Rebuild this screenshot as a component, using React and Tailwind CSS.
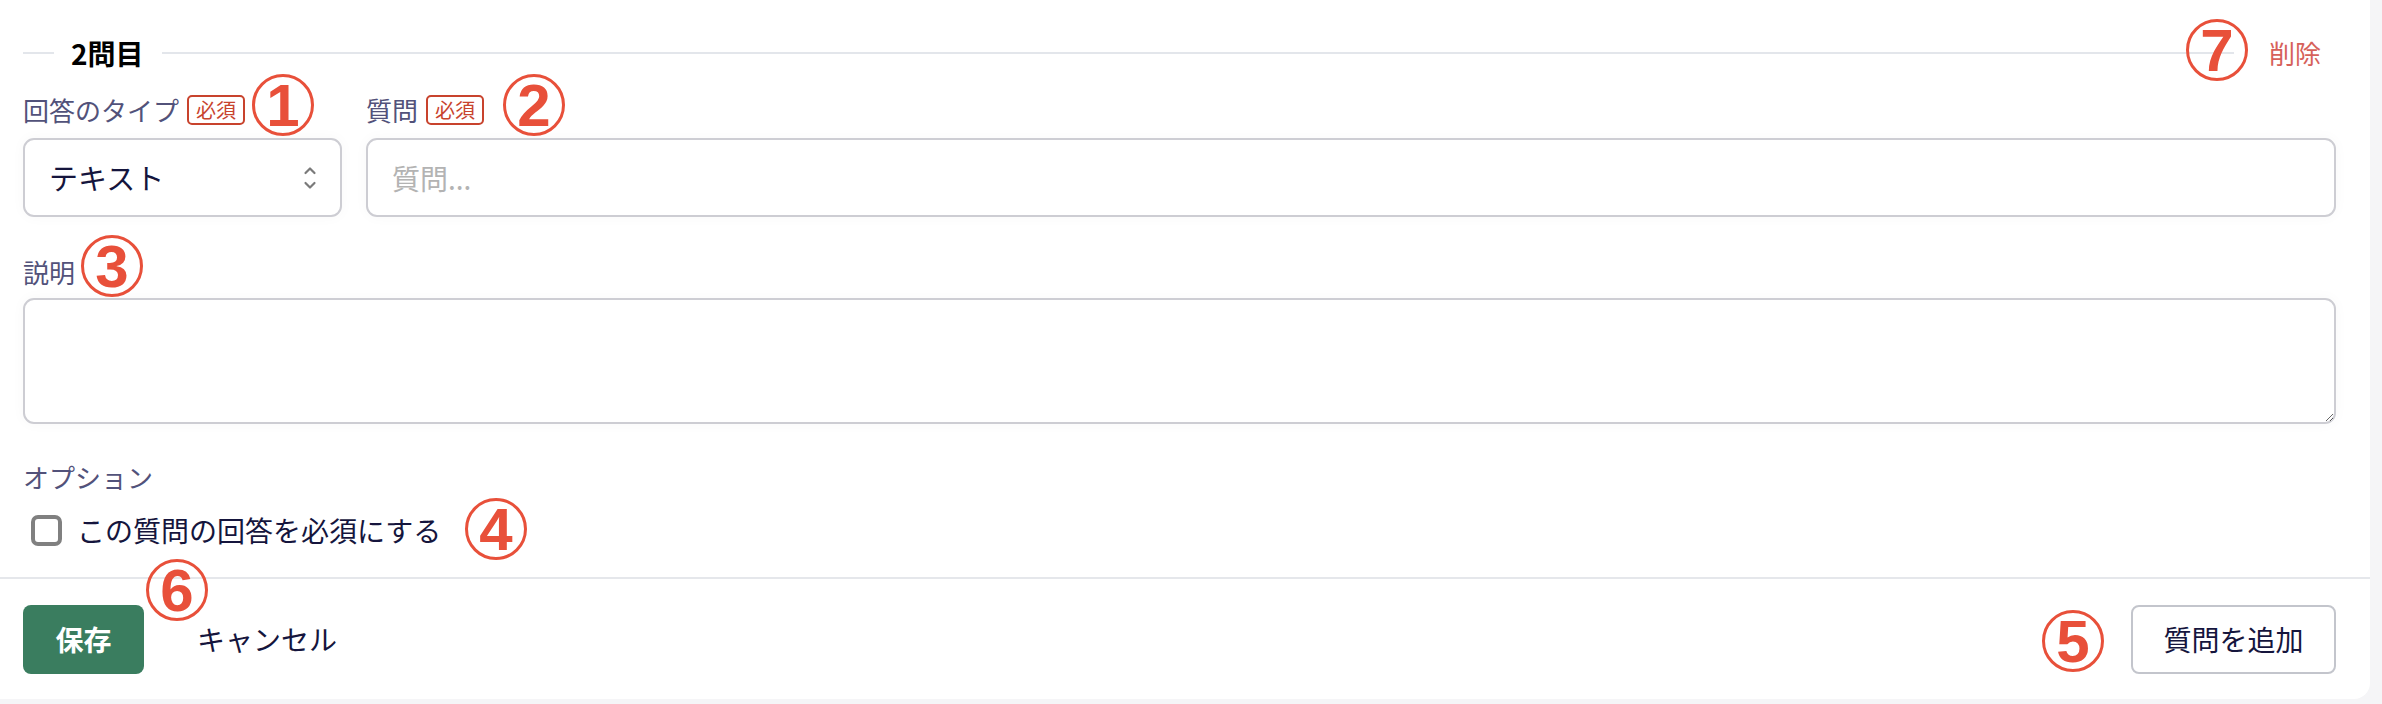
import React from "react";

function Circ({ n, className }) {
  return (
    <div
      className={`absolute w-[62px] h-[62px] rounded-full border-[3px] border-[#e8503a] bg-transparent flex items-center justify-center text-[#e8503a] font-['Liberation_Sans',sans-serif] font-bold text-[60px] leading-none pointer-events-none ${className}`}
    >
      <span className="block translate-y-[1px]">{n}</span>
    </div>
  );
}

function Badge() {
  return (
    <span className="ml-[8px] h-[30px] px-[7px] border-2 border-[#c8432d] rounded-[5px] text-[20px] leading-none text-[#c8432d] flex items-center">
      必須
    </span>
  );
}

export default function App() {
  return (
    <div className="w-[2382px] h-[704px] bg-[#f5f5f7] font-['Noto_Sans_CJK_JP',sans-serif]">
      <div className="relative w-[2370px] h-[699px] bg-white rounded-br-[16px] flex flex-col">
        <div className="pl-[23px] pr-[34px] pt-[38px]">
          {/* heading */}
          <div className="h-[30px] flex items-center">
            <div className="w-[31px] h-[2px] bg-[#e3e6eb]" />
            <span className="ml-[17px] text-[28px] font-bold leading-none text-black">2問目</span>
            <div className="ml-[18px] flex-1 h-[2px] bg-[#e3e6eb]" />
            <span className="ml-[35px] mr-[15px] text-[26px] leading-none text-[#d6615a]">削除</span>
          </div>

          {/* type + question */}
          <div className="mt-[27px] flex gap-[24px]">
            <div className="w-[319px]">
              <div className="h-[30px] flex items-center">
                <span className="text-[26px] leading-none text-[#52527a]">回答のタイプ</span>
                <Badge />
              </div>
              <div className="mt-[13px] h-[79px] border-2 border-[#cdcdd3] rounded-[11px] bg-white flex items-center justify-between pl-[24px] pr-[22px] shadow-[0_0_14px_rgba(0,0,0,0.03)]">
                <span className="text-[29px] leading-none text-[#15153d]">テキスト</span>
                <svg width="16" height="34" viewBox="0 0 16 34" fill="none" stroke="#7a7a7a" strokeWidth="2.2" strokeLinecap="round" strokeLinejoin="round">
                  <polyline points="3.5,12 8,7.5 12.5,12" />
                  <polyline points="3.5,22 8,26.5 12.5,22" />
                </svg>
              </div>
            </div>
            <div className="flex-1">
              <div className="h-[30px] flex items-center">
                <span className="text-[26px] leading-none text-[#52527a]">質問</span>
                <Badge />
              </div>
              <input
                className="mt-[13px] w-full h-[79px] border-2 border-[#cdcdd3] rounded-[11px] bg-white px-[24px] text-[28px] text-[#15153d] placeholder:text-[#b3b3b3] outline-none shadow-[0_0_14px_rgba(0,0,0,0.03)]"
                placeholder="質問..."
              />
            </div>
          </div>

          {/* description */}
          <div className="mt-[40px] h-[30px] flex items-center">
            <span className="text-[26px] leading-none text-[#52527a]">説明</span>
          </div>
          <textarea className="mt-[11px] block w-full h-[126px] border-2 border-[#cdcdd3] rounded-[11px] bg-white outline-none shadow-[0_0_14px_rgba(0,0,0,0.03)]" />

          {/* options */}
          <div className="mt-[38px] h-[30px] flex items-center">
            <span className="text-[26px] leading-none text-[#52527a]">オプション</span>
          </div>
          <div className="mt-[20px] h-[36px] flex items-center pl-[8px]">
            <div className="w-[31px] h-[31px] border-[4px] border-[#808080] rounded-[7px] bg-white" />
            <span className="ml-[15px] text-[28px] leading-none text-[#15153d]">この質問の回答を必須にする</span>
          </div>
        </div>

        <div className="mt-[29px] h-[2px] bg-[#e5e7eb]" />

        <div className="flex-1 flex items-center justify-between pl-[23px] pr-[34px]">
          <div className="flex items-center">
            <button className="w-[121px] h-[69px] bg-[#3a7d5f] rounded-[8px] text-white font-bold text-[28px] leading-none flex items-center justify-center">
              保存
            </button>
            <span className="ml-[53px] text-[28px] leading-none text-[#15153d]">キャンセル</span>
          </div>
          <button className="w-[205px] h-[69px] border-2 border-[#c3c5cc] rounded-[8px] bg-white text-[28px] leading-none text-[#15153d] flex items-center justify-center">
            質問を追加
          </button>
        </div>

        <Circ n="1" className="left-[252px] top-[74px]" />
        <Circ n="2" className="left-[503px] top-[74px]" />
        <Circ n="3" className="left-[81px] top-[235px]" />
        <Circ n="4" className="left-[465px] top-[498px]" />
        <Circ n="5" className="left-[2042px] top-[610px]" />
        <Circ n="6" className="left-[146px] top-[559px]" />
        <Circ n="7" className="left-[2186px] top-[19px]" />
      </div>
    </div>
  );
}
